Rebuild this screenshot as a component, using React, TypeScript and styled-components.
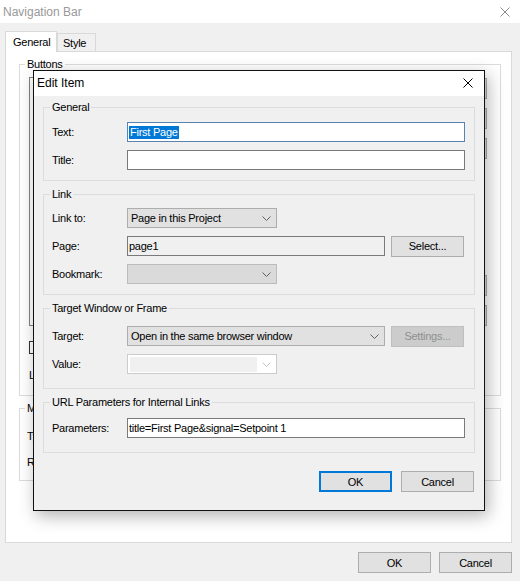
import styled, { createGlobalStyle } from 'styled-components';

const GlobalStyle = createGlobalStyle`
  html, body {
    margin: 0;
    padding: 0;
  }
  body {
    background: #f0f0f0;
    font-family: "Liberation Sans", Arial, sans-serif;
    font-size: 11px;
    letter-spacing: -0.25px;
    color: #000;
  }
  * {
    box-sizing: border-box;
  }
`;

const Window = styled.div`
  position: relative;
  width: 520px;
  height: 581px;
  overflow: hidden;
  background: #f0f0f0;
  display: flex;
  flex-direction: column;
`;

const TitleBar = styled.div<{ $active?: boolean }>`
  display: flex;
  align-items: center;
  justify-content: space-between;
  flex: none;
  height: ${(p) => (p.$active ? 25 : 23)}px;
  padding: ${(p) => (p.$active ? '0 11px 1px 3px' : '0 10px 0 3px')};
  background: #fff;
  font-size: 12px;
  letter-spacing: 0;
  color: ${(p) => (p.$active ? '#000' : '#999')};
`;

const TabStrip = styled.div`
  display: flex;
  align-items: flex-end;
  padding: 8px 0 0 5px;
  margin-bottom: -1px;
  position: relative;
  z-index: 1;
`;

const Tab = styled.div<{ $selected?: boolean }>`
  display: flex;
  align-items: center;
  height: ${(p) => (p.$selected ? 21 : 18)}px;
  width: ${(p) => (p.$selected ? 52 : 39)}px;
  margin-bottom: ${(p) => (p.$selected ? 0 : 1)}px;
  padding-left: ${(p) => (p.$selected ? 7 : 5)}px;
  border: 1px solid #d9d9d9;
  border-bottom: none;
  background: ${(p) => (p.$selected ? '#fff' : '#f0f0f0')};
`;

const Panel = styled.div`
  flex: none;
  height: 492px;
  margin: 0 8px 0 5px;
  padding: 5px 10px 0 13px;
  background: #fff;
  border: 1px solid #d9d9d9;
  display: flex;
  flex-direction: column;
  gap: 5px;
`;

const Group = styled.fieldset<{ $pt: number; $pb: number; $pl?: number; $pr?: number; $gap?: number }>`
  margin: 0;
  min-width: 0;
  border: 1px solid #dcdcdc;
  padding: ${(p) => p.$pt}px ${(p) => p.$pr ?? 9}px ${(p) => p.$pb}px ${(p) => p.$pl ?? 8}px;
  display: flex;
  flex-direction: column;
  gap: ${(p) => p.$gap ?? 8}px;
`;

const Legend = styled.legend<{ $shift?: number }>`
  padding: 0 2px;
  margin-left: ${(p) => p.$shift ?? -2}px;
  line-height: 14px;
  font-size: 11px;
`;

const ListRow = styled.div`
  display: flex;
  gap: 8px;
  height: 249px;
`;

const ListBox = styled.div`
  flex: 1;
  border: 1px solid #828282;
  background: #fff;
`;

const ButtonColumn = styled.div`
  display: flex;
  flex-direction: column;
  justify-content: space-between;
  padding-top: 1px;
`;

const ButtonStack = styled.div`
  display: flex;
  flex-direction: column;
  gap: 9px;
`;

const Row = styled.div<{ $mt?: number }>`
  display: flex;
  align-items: center;
  height: 20px;
  flex: none;
  margin-top: ${(p) => p.$mt ?? 0}px;
`;

const Label = styled.span<{ $w?: number }>`
  flex: none;
  width: ${(p) => p.$w ?? 75}px;
  white-space: nowrap;
`;

const CheckBox = styled.span`
  flex: none;
  width: 13px;
  height: 13px;
  margin-right: 4px;
  border: 1px solid #333;
  background: #fff;
`;

const TextBox = styled.div<{ $focused?: boolean; $readOnly?: boolean; $w?: number }>`
  display: flex;
  align-items: center;
  height: 20px;
  flex: ${(p) => (p.$w ? 'none' : '1')};
  width: ${(p) => (p.$w ? `${p.$w}px` : 'auto')};
  padding: 0 1px;
  border: 1px solid ${(p) => (p.$focused ? '#5a84ad' : '#7a7a7a')};
  background: ${(p) => (p.$readOnly ? '#f0f0f0' : '#fff')};
  white-space: nowrap;
  overflow: hidden;
`;

const Selection = styled.span`
  background: #0078d7;
  color: #fff;
  line-height: 13px;
  padding: 0 1px;
`;

type ComboVariant = 'normal' | 'disabled' | 'edit';

const Combo = styled.div<{ $w: number; $variant?: ComboVariant }>`
  display: flex;
  align-items: center;
  justify-content: space-between;
  flex: none;
  width: ${(p) => p.$w}px;
  height: 20px;
  padding: ${(p) => (p.$variant === 'edit' ? '0 5px 0 2px' : '0 5px 0 3px')};
  border: 1px solid
    ${(p) => (p.$variant === 'disabled' ? '#bcbcbc' : p.$variant === 'edit' ? '#cccccc' : '#adadad')};
  background: ${(p) => (p.$variant === 'disabled' ? '#dadada' : p.$variant === 'edit' ? '#fff' : '#e1e1e1')};
  white-space: nowrap;
  color: #000;
`;

const EditArea = styled.span`
  width: 127px;
  height: 15px;
  background: #f0f0f0;
`;

const Button = styled.div<{ $primary?: boolean; $disabled?: boolean }>`
  display: flex;
  align-items: center;
  justify-content: center;
  flex: none;
  width: 73px;
  height: 21px;
  border: 1px solid ${(p) => (p.$primary ? '#0078d7' : p.$disabled ? '#bfbfbf' : '#adadad')};
  box-shadow: ${(p) => (p.$primary ? 'inset 0 0 0 1px #0078d7' : 'none')};
  background: ${(p) => (p.$disabled ? '#cccccc' : '#e1e1e1')};
  color: ${(p) => (p.$disabled ? '#8f8f8f' : '#000')};
`;

const Footer = styled.div<{ $gap: number; $pt: number; $pr: number }>`
  display: flex;
  justify-content: flex-end;
  gap: ${(p) => p.$gap}px;
  padding: ${(p) => p.$pt}px ${(p) => p.$pr}px 0 0;
`;

const Dialog = styled.div`
  position: absolute;
  left: 33px;
  top: 70px;
  width: 452px;
  height: 441px;
  border: 1px solid #111;
  background: #f0f0f0;
  box-shadow: 3px 5px 16px rgba(0, 0, 0, 0.3);
  display: flex;
  flex-direction: column;
  z-index: 2;
`;

const DialogBody = styled.div`
  display: flex;
  flex-direction: column;
  gap: 6px;
  padding: 4px 9px 0;
`;

const CloseIcon = ({ color }: { color: string }) => (
  <svg width="10" height="10" viewBox="0 0 10 10">
    <path d="M0.5 0.5 L9.5 9.5 M9.5 0.5 L0.5 9.5" stroke={color} strokeWidth="1" fill="none" />
  </svg>
);

const Chevron = ({ color = '#606060' }: { color?: string }) => (
  <svg width="9" height="5" viewBox="0 0 9 5">
    <path d="M0.5 0.5 L4.5 4.5 L8.5 0.5" stroke={color} strokeWidth="1" fill="none" />
  </svg>
);

export default function App() {
  return (
    <>
      <GlobalStyle />
      <Window>
        <TitleBar>
          <span>Navigation Bar</span>
          <CloseIcon color="#8a8a8a" />
        </TitleBar>

        <TabStrip>
          <Tab $selected>General</Tab>
          <Tab>Style</Tab>
        </TabStrip>

        <Panel>
          <Group $pt={6} $pb={10} $pl={9} $pr={13} $gap={0}>
            <Legend $shift={-4}>Buttons</Legend>
            <ListRow>
              <ListBox />
              <ButtonColumn>
                <ButtonStack>
                  <Button>Add...</Button>
                  <Button>Edit...</Button>
                  <Button>Remove</Button>
                </ButtonStack>
                <ButtonStack>
                  <Button>Move Up</Button>
                  <Button>Move Down</Button>
                </ButtonStack>
              </ButtonColumn>
            </ListRow>
            <Row $mt={11}>
              <CheckBox />
              <span>Display first and last</span>
            </Row>
            <Row $mt={8}>
              <Label $w={98}>Layout:</Label>
              <Combo $w={150}>
                Horizontal
                <Chevron />
              </Combo>
            </Row>
          </Group>

          <Group $pt={11} $pb={8} $pl={7} $gap={6}>
            <Legend>Mode</Legend>
            <Row>
              <Label $w={100}>Type:</Label>
            </Row>
            <Row>
              <Label $w={100}>Rollover:</Label>
            </Row>
          </Group>
        </Panel>

        <Footer $gap={8} $pt={9} $pr={8}>
          <Button>OK</Button>
          <Button>Cancel</Button>
        </Footer>

        <Dialog>
          <TitleBar $active>
            <span>Edit Item</span>
            <CloseIcon color="#000" />
          </TitleBar>

          <DialogBody>
            <Group $pt={8} $pb={10}>
              <Legend>General</Legend>
              <Row>
                <Label>Text:</Label>
                <TextBox $focused>
                  <Selection>First Page</Selection>
                </TextBox>
              </Row>
              <Row>
                <Label>Title:</Label>
                <TextBox />
              </Row>
            </Group>

            <Group $pt={7} $pb={10}>
              <Legend>Link</Legend>
              <Row>
                <Label>Link to:</Label>
                <Combo $w={150}>
                  Page in this Project
                  <Chevron />
                </Combo>
              </Row>
              <Row>
                <Label>Page:</Label>
                <TextBox $readOnly $w={258}>page1</TextBox>
                <Button style={{ marginLeft: 6 }}>Select...</Button>
              </Row>
              <Row>
                <Label>Bookmark:</Label>
                <Combo $w={150} $variant="disabled">
                  <span />
                  <Chevron />
                </Combo>
              </Row>
            </Group>

            <Group $pt={11} $pb={14}>
              <Legend>Target Window or Frame</Legend>
              <Row>
                <Label>Target:</Label>
                <Combo $w={258}>
                  Open in the same browser window
                  <Chevron />
                </Combo>
                <Button $disabled style={{ marginLeft: 6 }}>
                  Settings...
                </Button>
              </Row>
              <Row>
                <Label>Value:</Label>
                <Combo $w={150} $variant="edit">
                  <EditArea />
                  <Chevron color="#c4c4c4" />
                </Combo>
              </Row>
            </Group>

            <Group $pt={9} $pb={14}>
              <Legend>URL Parameters for Internal Links</Legend>
              <Row>
                <Label>Parameters:</Label>
                <TextBox>title=First Page&amp;signal=Setpoint 1</TextBox>
              </Row>
            </Group>
          </DialogBody>

          <Footer $gap={9} $pt={18} $pr={10}>
            <Button $primary>OK</Button>
            <Button>Cancel</Button>
          </Footer>
        </Dialog>
      </Window>
    </>
  );
}
